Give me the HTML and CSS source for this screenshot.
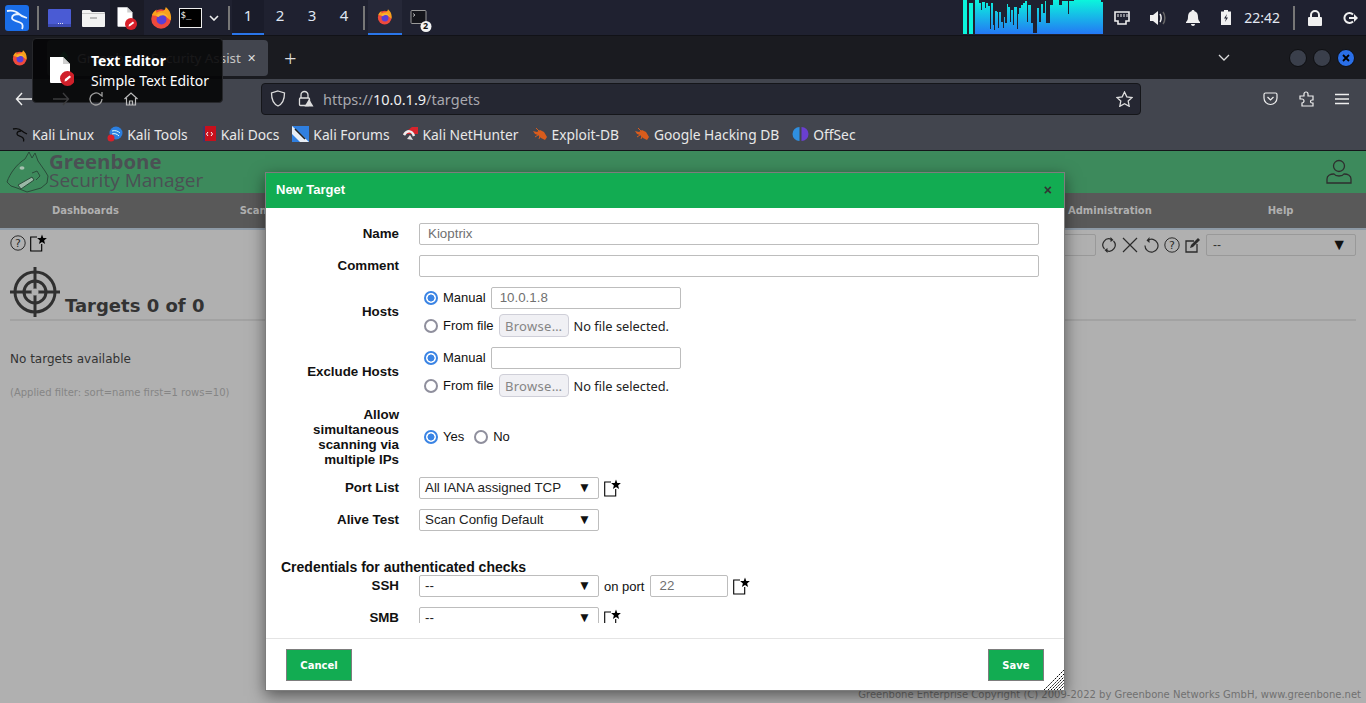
FILE: index.html
```html
<!DOCTYPE html>
<html lang="en">
<head>
  <meta charset="UTF-8">
  <title>Greenbone Security Assistant</title>
  <link rel="stylesheet" href="styles.css">
</head>
<body>

<svg class="defs" width="0" height="0">
  <defs>
    <linearGradient id="viz" x1="0" y1="0" x2="0" y2="1">
      <stop offset="0" stop-color="#0bf5dc"/>
      <stop offset="1" stop-color="#2478f5"/>
    </linearGradient>
    <symbol id="firefox" viewBox="0 0 24 24">
      <circle cx="11.5" cy="13" r="10.2" fill="#ef4a3c"/>
      <path d="M2 9c1-3 3-5 5-6-1 2-.5 3 0 3.500 2-1.500 4-2 6-1.500 2-.5 3-2.500 3.500-4.500 3 2.500 5.500 6 5.500 11 0 1-.1 2-.4 3L15 9 7 10z" fill="#f9a11c"/>
      <circle cx="12" cy="13.500" r="5.200" fill="#5a3fd6"/>
      <path d="M6.500 9.500c2-2.500 6-3.500 9-2 2 1 3.500 3 3.500 5-1-2-3-3.500-5.500-3.500-2.500 0-4 1-4.500 2-1.500-.2-2.200-.8-2.500-1.500z" fill="#fbb534"/>
    </symbol>
    <symbol id="new-icon" viewBox="0 0 20 20">
      <path d="M7 4H.7v14h11V11" fill="none" stroke="#000" stroke-width="1.100"/>
      <path d="M12 1.500l1.300 3.400 3.600.2-2.800 2.300 1 3.500-3.100-2-3.100 2 1-3.500-2.800-2.300 3.600-.2z" fill="#000"/>
    </symbol>
    <symbol id="doc" viewBox="0 0 24 28">
      <path d="M2 1h13l7 7v18a1 1 0 0 1-1 1H3a1 1 0 0 1-1-1z" fill="#fff"/>
      <path d="M15 1l7 7h-7z" fill="#cfcfcf"/>
    </symbol>
    <symbol id="bug" viewBox="0 0 16 16">
      <path d="M1 5l4 1 3-2 4 2 3 5-2 3-4-2-3-3-3-1z" fill="#d95c1c"/>
      <path d="M3 11l3-2M7 13l1-3M4 2l3 3" stroke="#d95c1c" stroke-width="1"/>
    </symbol>
  </defs>
</svg>

<div class="panel">
  <div class="launcher kali">
    <svg width="24" height="26" viewBox="0 0 24 26">
      <rect width="24" height="26" rx="3" fill="#1a6de8"/>
      <path d="M2 6c5-1 9 0 12 3 2 2 4 3 8 4M14 9c-4 0-7 1-7 4 0 3 6 3 9 5 2 1 2 4 1 6" fill="none" stroke="#eaf3ff" stroke-width="1.800"/>
    </svg>
  </div>
  <div class="sep"></div>
  <div class="launcher">
    <svg width="23" height="18" viewBox="0 0 23 18"><rect width="23" height="18" rx="1" fill="#4a5bd4"/><rect y="15" width="23" height="3" fill="#3c4ab0"/><path d="M10 14h1v1h-1zM12 14h1v1h-1zM14 14h1v1h-1z" fill="#dde"/></svg>
  </div>
  <div class="launcher">
    <svg width="23" height="18" viewBox="0 0 23 18"><path d="M0 2a1 1 0 0 1 1-1h7l2 2h12a1 1 0 0 1 1 1v13a1 1 0 0 1-1 1H1a1 1 0 0 1-1-1z" fill="#f3f3f3"/><rect y="4" width="23" height="1" fill="#c9c9c9"/><rect x="8" y="8" width="7" height="2" fill="#bbb"/></svg>
  </div>
  <div class="launcher on">
    <svg width="22" height="28" viewBox="0 0 22 28"><use href="#doc" x="0" y="0" width="18" height="26"/><circle cx="15" cy="20" r="6" fill="#d8202a"/><path d="M12.500 22.500l.5-2 4-3 1.200 1.500-4 3z" fill="#fff"/></svg>
  </div>
  <div class="launcher"><svg width="23" height="24"><use href="#firefox"/></svg></div>
  <div class="launcher term">
    <span class="term-box">$_</span>
  </div>
  <svg class="chev" width="10" height="6" viewBox="0 0 10 6"><path d="M1 1l4 4 4-4" fill="none" stroke="#eee" stroke-width="1.600"/></svg>
  <div class="sep sep-b"></div>
  <div class="ws on">1</div>
  <div class="ws">2</div>
  <div class="ws">3</div>
  <div class="ws">4</div>
  <div class="sep sep-c"></div>
  <div class="task on"><svg width="16" height="16"><use href="#firefox"/></svg></div>
  <div class="task">
    <svg width="26" height="28" viewBox="0 0 26 28"><rect x="5" y="6.500" width="15" height="13" rx="1" fill="#14151b" stroke="#9a9a9a"/><path d="M7 9.500l2 1.500-2 1.500" stroke="#ddd" fill="none" stroke-width=".8"/><circle cx="20" cy="22.500" r="5.500" fill="#f2f2f2"/></svg>
    <span class="badge">2</span>
  </div>

  <div class="tray">
    <svg class="viz" width="140" height="34" viewBox="0 0 140 34">
      <path fill="#0bf5dc" d="M0 0h4v34H0zM6 3h4v31H6z"/>
      <path fill="url(#viz)" d="M12 34V0h4v3h2v7h1V2h3v6h1V3h2v3h2v23h1V3h2v22h1v5h1V11h2v1h1v16h1V12h2v10h2v6h1V17h1v6h2V4h1v3h2v15h1V10h2v15h1V7h3v22h1V14h1V8h2V5h2V3h2V1h2v21h1V5h3v18h2v10h4V8h2v14h2V4h2v9h2V1h1v22h4V5h3V0h6v5h3V1h6v13h1V1h5V0h27v2h3v32z"/>
    </svg>
    <svg class="tray-net" width="16" height="14" viewBox="0 0 16 14"><path d="M1 1h14v9h-3v3H4v-3H1z" fill="none" stroke="#eee" stroke-width="1.600"/><path d="M4 3v3M7 3v3M10 3v3M13 3v3" stroke="#eee"/></svg>
    <svg class="tray-vol" width="18" height="16" viewBox="0 0 18 16"><path d="M1 5h3l5-4v14l-5-4H1z" fill="#f0f0f0"/><path d="M11 4c1.500 2 1.500 6 0 8" stroke="#f0f0f0" stroke-width="1.500" fill="none"/><path d="M14 2c2.500 3 2.500 9 0 12" stroke="#666" stroke-width="1.500" fill="none"/></svg>
    <svg class="tray-bell" width="16" height="16" viewBox="0 0 16 16"><path d="M8 0c1 0 1.500.6 1.500 1.300C12 2 13 4 13 7c0 3 1 4 2 5v1H1v-1c1-1 2-2 2-5 0-3 1-5 3.500-5.700C6.500.6 7 0 8 0zM6 14h4c0 1-1 2-2 2s-2-1-2-2z" fill="#f0f0f0"/></svg>
    <svg class="tray-bat" width="10" height="15" viewBox="0 0 10 15"><path d="M3 0h4v1.500h3V15H0V1.500h3z" fill="#f0f0f0"/><path d="M6 4L3 8.500h2L4 12l3-4.500H5z" fill="#1f2130"/></svg>
    <span class="clock">22:42</span>
    <div class="sep sep-d"></div>
    <svg class="tray-lock" width="14" height="16" viewBox="0 0 14 16"><path d="M3 7V5a4 4 0 0 1 8 0v2" fill="none" stroke="#f0f0f0" stroke-width="2"/><rect y="7" width="14" height="9" rx="1" fill="#f0f0f0"/></svg>
    <svg class="tray-out" width="16" height="14" viewBox="0 0 16 14"><path d="M10 3.500A5 5 0 1 0 10 10.500" fill="none" stroke="#f0f0f0" stroke-width="2"/><path d="M6 7h6" stroke="#f0f0f0" stroke-width="2"/><path d="M11 3l4 4-4 4z" fill="#f0f0f0"/></svg>
  </div>
</div>

<div class="tabbar">
  <svg class="tab-fox" width="16" height="16"><use href="#firefox"/></svg>
  <div class="tab">
    <svg width="12" height="14" viewBox="0 0 12 14"><path d="M6 0l5 6H8l3 4H7v4H5v-4H1l3-4H1z" fill="#2f9a5c"/></svg>
    <span class="tab-title">Greenbone Security Assist</span>
    <span class="tab-x">&#10005;</span>
  </div>
  <span class="tab-new">+</span>
  <div class="winbtns">
    <svg class="tab-chev" width="12" height="7" viewBox="0 0 12 7"><path d="M1 1l5 5 5-5" fill="none" stroke="#ddd" stroke-width="1.300"/></svg>
    <span class="winbtn"></span>
    <span class="winbtn"></span>
    <span class="winbtn close">
      <svg width="8" height="8" viewBox="0 0 8 8"><path d="M1 1l6 6M7 1L1 7" stroke="#000" stroke-width="1.800"/></svg>
    </span>
  </div>
</div>

<div class="toolbar">
  <div class="nav-btns">
    <svg class="back" width="18" height="14" viewBox="0 0 18 14"><path d="M17 7H2M7 1L1.500 7 7 13" fill="none" stroke="#eee" stroke-width="1.400"/></svg>
    <svg class="soft" width="18" height="14" viewBox="0 0 18 14"><path d="M1 7h15M11 1l5.500 6L11 13" fill="none" stroke="#3c3c3e" stroke-width="1.400"/></svg>
    <svg class="soft" width="16" height="16" viewBox="0 0 16 16"><path d="M14 8a6 6 0 1 1-2-4.500L14 5V1" fill="none" stroke="#a0a0a0" stroke-width="1.300"/></svg>
    <svg class="soft" width="16" height="16" viewBox="0 0 16 16"><path d="M1.500 8L8 2l6.500 6M3.500 7v7h9V7M6.500 14v-4h3v4" fill="none" stroke="#bbb" stroke-width="1.200"/></svg>
  </div>
  <div class="urlbar">
    <svg width="16" height="17" viewBox="0 0 16 17"><path d="M8 1l6.500 2c0 6-1 10.500-6.500 13C2.500 13.500 1.500 9 1.500 3z" fill="none" stroke="#ddd" stroke-width="1.300"/></svg>
    <svg class="url-lock" width="17" height="17" viewBox="0 0 17 17"><path d="M4 8V5a3.500 3.500 0 0 1 7 0v3" fill="none" stroke="#ddd" stroke-width="1.300"/><rect x="2.500" y="8" width="10" height="7.500" rx="1" fill="none" stroke="#ddd" stroke-width="1.300"/><path d="M12 9l4.500 7.500h-9z" fill="#ddd"/></svg>
    <span class="url"><span class="url-dim">https://</span>10.0.1.9<span class="url-dim">/targets</span></span>
    <svg width="17" height="16" viewBox="0 0 17 16"><path d="M8.500 1l2.300 4.800 5.200.7-3.800 3.600 1 5.200-4.700-2.500-4.700 2.500 1-5.200L1 6.500l5.200-.7z" fill="none" stroke="#ddd" stroke-width="1.300"/></svg>
  </div>
  <div class="tool-icons">
    <svg width="15" height="14" viewBox="0 0 15 14"><path d="M1 2.500C1 1.500 1.500 1 2.500 1h10c1 0 1.500.5 1.500 1.500V6a6.500 6.500 0 0 1-13 0z" fill="none" stroke="#eee" stroke-width="1.200"/><path d="M4.500 5L7.500 8l3-3" fill="none" stroke="#eee" stroke-width="1.200"/></svg>
    <svg width="15" height="16" viewBox="0 0 15 16"><path d="M1 5h4V3a2 2 0 0 1 4 0v2h5v4h-1a1.500 1.500 0 0 0 0 3h1v3H3v-3a2 2 0 0 0 0-4H1z" fill="none" stroke="#eee" stroke-width="1.200"/></svg>
    <svg width="14" height="12" viewBox="0 0 14 12"><path d="M0 1.500h14M0 6h14M0 10.500h14" stroke="#eee" stroke-width="1.300"/></svg>
  </div>
</div>

<div class="bookmarks">
  <span class="bm"><svg width="16" height="16" viewBox="0 0 16 16"><path d="M1 3c4-1 7 0 9 2 1 1 3 2 5 3M9 5C6 5 5 6 5 8c0 2 4 2 6 4 1 1 1 2 .5 3.500" fill="none" stroke="#0c0c0c" stroke-width="1.300"/></svg>Kali Linux</span>
  <span class="bm"><svg width="16" height="16" viewBox="0 0 16 16"><circle cx="9" cy="7" r="6.500" fill="#2b7fe0"/><path d="M5 5c3-1 6 0 8 2M5 8c3-1 5 0 7 2" stroke="#dff" fill="none"/><circle cx="4" cy="12" r="3.500" fill="#d8202a"/></svg>Kali Tools</span>
  <span class="bm"><svg width="16" height="16" viewBox="0 0 16 16"><rect x="2" width="13" height="15" fill="#c8101c"/><rect x="2" width="2" height="16" fill="#3a3a6a"/><path d="M7 6L5.500 8 7 10M10 6l1.500 2L10 10" stroke="#fff" fill="none"/></svg>Kali Docs</span>
  <span class="bm"><svg width="17" height="16" viewBox="0 0 17 16"><rect width="17" height="16" fill="#2f7fe0"/><path d="M0 0l17 16H8L0 8z" fill="#e8eef5"/><path d="M3 3l10 10" stroke="#222" stroke-width="1.500"/></svg>Kali Forums</span>
  <span class="bm"><svg width="16" height="16" viewBox="0 0 16 16"><path d="M0 8L9 1h6v7z" fill="#d8242c"/><path d="M1 9c3-5 8-5 10 1" fill="none" stroke="#eee" stroke-width="2.500"/><path d="M4 13l3-4 3 5z" fill="#ddd"/></svg>Kali NetHunter</span>
  <span class="bm bm-db"><svg width="16" height="16"><use href="#bug"/></svg>Exploit-DB</span>
  <span class="bm"><svg width="16" height="16"><use href="#bug"/></svg>Google Hacking DB</span>
  <span class="bm"><svg width="17" height="16" viewBox="0 0 16 16"><path d="M7 1a7 7 0 0 0 0 14z" fill="#2f8fe0"/><path d="M9 1a7 7 0 0 1 0 14z" fill="#6a3fd0"/></svg>OffSec</span>
</div>

<div class="page">
  <header class="gsm-head">
    <svg class="gsm-logo" width="44" height="42" viewBox="0 0 44 42">
      <path d="M2 31C5 22 12 13 20 8l4-7 3 6 3-5 3 8 7 10 3 5-1 7-6 5-14 4-10-4-6-2z" fill="none" stroke="#2a4c3a" stroke-width="1"/>
      <path d="M13 34l14-8 2 3-13 9z" fill="#9ab8a6" stroke="#2a4c3a"/>
      <path d="M27 22l5-2 3 5-4 4" fill="none" stroke="#2a4c3a"/>
      <ellipse cx="17" cy="17" rx="2.500" ry="1.800" fill="#a8c0b0"/>
    </svg>
    <div class="gsm-name">
      <span class="gsm-brand">Greenbone</span>
      <span class="gsm-sub">Security Manager</span>
    </div>
    <svg class="gsm-user" width="26" height="26" viewBox="0 0 26 26"><circle cx="13" cy="7" r="5.500" fill="none" stroke="#2e2e2e" stroke-width="1.300"/><path d="M1 24v-4c0-3 3-5 7-5 1 1.500 3 2 5 2s4-.5 5-2c4 0 7 2 7 5v4z" fill="none" stroke="#2e2e2e" stroke-width="1.300"/></svg>
  </header>

  <nav class="gsm-nav">
    <span>Dashboards</span>
    <span>Scans</span>
    <span>Assets</span>
    <span>Resilience</span>
    <span>SecInfo</span>
    <span>Configuration</span>
    <span>Administration</span>
    <span>Help</span>
  </nav>

  <div class="gsm-bar">
    <div class="gsm-tools">
      <svg width="16" height="16" viewBox="0 0 16 16"><circle cx="8" cy="8" r="7.200" fill="none" stroke="#2b2b2b"/><text x="8" y="12" text-anchor="middle" class="q">?</text></svg>
      <svg width="20" height="20"><use href="#new-icon"/></svg>
    </div>
    <div class="gsm-filter">
      <span class="filter-input"></span>
      <svg width="16" height="16" viewBox="0 0 15 16"><path d="M3 12A6 6 0 0 1 10 2.500M12 4a6 6 0 0 1-7 9.500" fill="none" stroke="#2b2b2b" stroke-width="1.200"/><path d="M9 0l3 3-3 2zM6 16l-3-3 3-2z" fill="#2b2b2b"/></svg>
      <svg width="16" height="16" viewBox="0 0 16 16"><path d="M1 1l14 14M15 1L1 15" stroke="#2b2b2b" stroke-width="1.200"/></svg>
      <svg width="16" height="16" viewBox="0 0 15 16"><path d="M4 3.500a6.500 6.500 0 1 1-2.500 5" fill="none" stroke="#2b2b2b" stroke-width="1.200"/><path d="M6 0L3 3.500 6 6z" fill="#2b2b2b"/></svg>
      <svg width="16" height="16" viewBox="0 0 16 16"><circle cx="8" cy="8" r="7.200" fill="none" stroke="#2b2b2b"/><text x="8" y="12" text-anchor="middle" class="q">?</text></svg>
      <svg width="16" height="16" viewBox="0 0 16 16"><path d="M12 7v8H1V4h8" fill="none" stroke="#2b2b2b" stroke-width="1.300"/><path d="M5 11l1-3 7-7 2 2-7 7z" fill="#2b2b2b"/></svg>
      <span class="filter-select">--<span class="arrow">&#9660;</span></span>
    </div>
  </div>

  <div class="gsm-title">
    <svg width="50" height="50" viewBox="0 0 50 50">
      <circle cx="25" cy="25" r="20" fill="none" stroke="#303030" stroke-width="3"/>
      <circle cx="25" cy="25" r="11" fill="none" stroke="#303030" stroke-width="3"/>
      <path d="M25 0v50M0 25h50" stroke="#303030" stroke-width="3"/>
      <circle cx="25" cy="25" r="3.500" fill="#b0b0b0"/>
    </svg>
    <h1>Targets 0 of 0</h1>
  </div>
  <p class="empty">No targets available</p>
  <p class="applied">(Applied filter: sort=name first=1 rows=10)</p>
  <footer class="copyright">Greenbone Enterprise Copyright (C) 2009-2022 by Greenbone Networks GmbH, www.greenbone.net</footer>

  <section class="dialog">
    <div class="dialog-head">
      <span>New Target</span>
      <span class="dialog-x">&times;</span>
    </div>
    <div class="dialog-body">
      <div class="row">
        <label>Name</label>
        <input class="text wide" type="text" value="Kioptrix">
      </div>
      <div class="row">
        <label>Comment</label>
        <input class="text wide" type="text">
      </div>
      <div class="row">
        <label>Hosts</label>
        <div class="stack">
          <div class="line">
            <input class="radio" type="radio" name="hosts" checked><span class="opt">Manual</span>
            <input class="text mid" type="text" value="10.0.1.8">
          </div>
          <div class="line file">
            <input class="radio" type="radio" name="hosts"><span class="opt">From file</span>
            <button class="browse" type="button">Browse&hellip;</button><span class="nofile">No file selected.</span>
          </div>
        </div>
      </div>
      <div class="row">
        <label>Exclude Hosts</label>
        <div class="stack">
          <div class="line">
            <input class="radio" type="radio" name="exclude" checked><span class="opt">Manual</span>
            <input class="text mid" type="text">
          </div>
          <div class="line file">
            <input class="radio" type="radio" name="exclude"><span class="opt">From file</span>
            <button class="browse" type="button">Browse&hellip;</button><span class="nofile">No file selected.</span>
          </div>
        </div>
      </div>
      <div class="row">
        <label class="tall">Allow simultaneous scanning via multiple IPs</label>
        <div class="line">
          <input class="radio" type="radio" name="multi" checked><span class="opt">Yes</span>
          <input class="radio radio-no" type="radio" name="multi"><span class="opt">No</span>
        </div>
      </div>
      <div class="row">
        <label>Port List</label>
        <span class="select">All IANA assigned TCP<span class="arrow">&#9660;</span></span>
        <svg class="new" width="20" height="20"><use href="#new-icon"/></svg>
      </div>
      <div class="row">
        <label>Alive Test</label>
        <span class="select">Scan Config Default<span class="arrow">&#9660;</span></span>
      </div>
      <h3>Credentials for authenticated checks</h3>
      <div class="row">
        <label>SSH</label>
        <span class="select">--<span class="arrow">&#9660;</span></span>
        <span class="onport">on port</span>
        <input class="text port" type="text" value="22">
        <svg class="new" width="20" height="20"><use href="#new-icon"/></svg>
      </div>
      <div class="row">
        <label>SMB</label>
        <span class="select">--<span class="arrow">&#9660;</span></span>
        <svg class="new" width="20" height="20"><use href="#new-icon"/></svg>
      </div>
    </div>
    <div class="dialog-foot">
      <button class="act act-cancel" type="button">Cancel</button>
      <button class="act act-save" type="button">Save</button>
      <svg class="grip" width="20" height="20" viewBox="0 0 20 20">
        <path d="M0 20L20 0M4 20L20 4M7 20L20 7M10 20L20 10M13 20l7-7M16 20l4-4" stroke="#000" stroke-width="1" stroke-dasharray="2 1"/>
      </svg>
    </div>
  </section>
</div>

<div class="tooltip">
  <svg width="26" height="30" viewBox="0 0 26 30"><use href="#doc" x="0" y="0" width="24" height="28"/><circle cx="19.500" cy="22.500" r="7.500" fill="#d0202a"/><path d="M16.500 25.500l.5-2.500 4.500-3.500 1.500 1.500-4.500 4z" fill="#fff"/></svg>
  <div>
    <div class="tip-title">Text Editor</div>
    <div class="tip-sub">Simple Text Editor</div>
  </div>
</div>

</body>
</html>
```

FILE: styles.css
```css
body {
  margin: 0;
  width: 1366px;
  height: 703px;
  overflow: hidden;
  position: relative;
  background-color: #b0b0b0;
  font-family: 'Noto Sans', sans-serif;
}

.defs {
  display: block;
  height: 0;
}

/* desktop panel */
.panel {
  height: 35px;
  background-color: #1f2130;
  border-bottom: 1px solid #111217;
  display: flex;
  align-items: center;
  color: #dfe6f2;
}

.launcher {
  width: 34px;
  height: 35px;
  display: flex;
  justify-content: center;
  align-items: center;
}

.launcher.kali {
  width: 24px;
  margin-left: 5px;
}

.launcher.on {
  background-color: #1a1b26;
}

.sep {
  width: 2px;
  height: 24px;
  background-color: #777;
  margin: 0 3px 0 8px;
}

.sep-b {
  margin: 0 2px 0 9px;
}

.sep-c {
  margin: 0 3px 0 3px;
}

.sep-d {
  margin: 0 0 0 13px;
}

.term {
  margin-left: -5px;
}

.term-box {
  width: 20px;
  height: 18px;
  background-color: #000;
  border: 1px solid #eee;
  font-family: 'DejaVu Sans Mono', monospace;
  font-size: 9px;
  line-height: 12px;
  padding-left: 1px;
  box-sizing: content-box;
  color: #fff;
}

.chev {
  margin-left: 2px;
}

.ws {
  width: 32px;
  height: 35px;
  box-sizing: border-box;
  text-align: center;
  font-size: 15px;
  line-height: 31px;
}

.ws.on {
  background-color: #1a1c2a;
  border-bottom: 2px solid #2a76ea;
}

.task {
  width: 34px;
  height: 35px;
  box-sizing: border-box;
  display: flex;
  justify-content: center;
  align-items: center;
  position: relative;
}

.task.on {
  background-color: #262838;
  border-bottom: 2px solid #2a76ea;
}

.badge {
  position: absolute;
  left: 18px;
  top: 20px;
  width: 11px;
  font-size: 9px;
  line-height: 11px;
  font-weight: 700;
  text-align: center;
  color: #111;
}

.tray {
  margin-left: auto;
  display: flex;
  align-items: center;
  height: 35px;
  padding-right: 7px;
}

.viz {
  margin-right: 11px;
  align-self: flex-start;
}

.tray-vol {
  margin-left: 19px;
}

.tray-bell {
  margin-left: 18px;
}

.tray-bat {
  margin-left: 20px;
}

.clock {
  margin-left: 13px;
  font-size: 14px;
  color: #e3e8f2;
}

.tray-lock {
  margin-left: 13px;
}

.tray-out {
  margin-left: 21px;
}

/* browser */
.tabbar {
  height: 43px;
  background-color: #1a1b20;
  display: flex;
  align-items: center;
  color: #ddd;
}

.tab-fox {
  margin-left: 12px;
}

.tab {
  width: 221px;
  height: 36px;
  margin-left: 19px;
  background-color: #42454e;
  border-radius: 4px;
  box-sizing: border-box;
  padding: 0 12px 0 11px;
  display: flex;
  align-items: center;
  font-size: 13.4px;
  white-space: nowrap;
}

.tab-title {
  flex: 1;
  margin-left: 7px;
  color: #c4c4c4;
  overflow: hidden;
}

.tab-x {
  font-size: 11px;
  margin-left: 4px;
}

.tab-new {
  margin-left: 16px;
  font-size: 22px;
  font-weight: 300;
}

.winbtns {
  margin-left: auto;
  padding-right: 11px;
  display: flex;
  align-items: center;
  gap: 6px;
}

.tab-chev {
  margin-right: 53px;
}

.winbtn {
  width: 16px;
  height: 16px;
  border: 1px solid #0e0f12;
  border-radius: 50%;
  background-color: #3a3f4b;
  display: flex;
  align-items: center;
  justify-content: center;
}

.winbtn.close {
  background-color: #2a6fe8;
}

.toolbar {
  height: 39px;
  background-color: #42454e;
  display: flex;
  align-items: center;
}

.nav-btns {
  width: 261px;
  box-sizing: border-box;
  padding: 0 122px 0 15px;
  display: flex;
  justify-content: space-between;
  align-items: center;
}

/* these sit under the tooltip in the shot but still read through it */
.soft {
  position: relative;
  z-index: 2;
}

.urlbar {
  width: 880px;
  height: 32px;
  box-sizing: border-box;
  background-color: #252732;
  border: 1px solid #15161a;
  border-radius: 4px;
  padding: 0 7px 0 8px;
  display: flex;
  align-items: center;
}

.url-lock {
  margin-left: 11px;
}

.url {
  margin-left: 9px;
  flex: 1;
  font-size: 14.5px;
  color: #f0f0f0;
}

.url-dim {
  color: #a8a8ae;
}

.tool-icons {
  margin-left: 122px;
  display: flex;
  align-items: center;
  gap: 21px;
}

.bookmarks {
  height: 32px;
  background-color: #42454e;
  border-bottom: 1px solid #14151a;
  display: flex;
  align-items: center;
  padding-left: 12px;
  gap: 13px;
  font-size: 13.8px;
  color: #e8e8e8;
}

.bm {
  display: flex;
  align-items: center;
  gap: 4px;
  white-space: nowrap;
}

.bm-db {
  margin-right: 2px;
}

/* greenbone page, dimmed by the dialog backdrop */
.page {
  position: relative;
  height: 552px;
  background-color: #b0b0b0;
  font-family: 'DejaVu Sans', sans-serif;
  color: #333;
}

.gsm-head {
  height: 42px;
  background-color: #3d8a5c;
  display: flex;
  align-items: center;
  padding: 0 14px 0 5px;
}

.gsm-name {
  display: flex;
  flex-direction: column;
  margin-top: -4px;
  font-family: 'Open Sans', sans-serif;
  color: #4b5054;
}

.gsm-brand {
  font-size: 20.4px;
  font-weight: 700;
  line-height: 20px;
}

.gsm-sub {
  font-size: 19px;
  line-height: 19px;
}

.gsm-user {
  margin-left: auto;
}

.gsm-nav {
  height: 35px;
  background-color: #595959;
  border-bottom: 2px solid #8e9aa6;
  display: grid;
  grid-template-columns: repeat(8, 1fr);
  align-items: center;
  text-align: center;
  font-size: 10px;
  font-weight: 700;
  color: #b0b0b0;
}

.gsm-bar {
  height: 30px;
  padding: 0 10px;
  display: flex;
  justify-content: space-between;
  align-items: center;
}

.gsm-tools,
.gsm-filter {
  display: flex;
  align-items: center;
  gap: 5px;
}

.gsm-tools {
  gap: 4px;
  margin-top: -4px;
}

.q {
  font-size: 11px;
  fill: #2b2b2b;
}

.filter-input {
  width: 100px;
  height: 20px;
  border: 1px solid #999;
  border-radius: 2px;
}

.filter-select {
  width: 150px;
  height: 22px;
  box-sizing: border-box;
  border: 1px solid #999;
  border-radius: 2px;
  padding: 0 8px 0 6px;
  display: flex;
  align-items: center;
  justify-content: space-between;
  font: 12px 'Liberation Sans', sans-serif;
}

.gsm-title {
  margin: 7px 10px 0;
  padding-bottom: 2px;
  border-bottom: 2px solid #a2a2a2;
  display: flex;
  align-items: flex-end;
  gap: 5px;
}

h1 {
  margin: 0;
  font-size: 18px;
  line-height: 22px;
  color: #333;
}

.empty {
  margin: 31px 10px 0;
  font-size: 12px;
  line-height: 15px;
}

.applied {
  margin: 19px 10px 0;
  font-size: 10px;
  line-height: 13px;
  color: #858585;
}

.copyright {
  position: absolute;
  right: 5px;
  bottom: 2px;
  font-size: 10px;
  line-height: 13px;
  color: #707070;
}

/* dialog */
.dialog {
  position: absolute;
  left: 265px;
  top: 21px;
  width: 800px;
  height: 519px;
  box-sizing: border-box;
  background-color: #fff;
  border: 1px solid #7d7d7d;
  box-shadow: 0 5px 15px rgba(0, 0, 0, 0.5);
  display: flex;
  flex-direction: column;
  font-family: 'Liberation Sans', sans-serif;
  font-size: 13.33px;
  color: #111;
}

.dialog-head {
  height: 35px;
  flex: none;
  box-sizing: border-box;
  background-color: #12ac52;
  color: #fff;
  font-size: 13px;
  font-weight: 700;
  padding: 0 10px 2px;
  display: flex;
  align-items: center;
  justify-content: space-between;
}

.dialog-x {
  color: #333;
  font-size: 14px;
  margin-right: 2px;
}

.dialog-body {
  height: 415px;
  flex: none;
  margin-bottom: 15px;
  padding: 15px 0 0 15px;
  box-sizing: border-box;
  overflow: hidden;
}

.row {
  display: flex;
  align-items: center;
  margin-bottom: 10px;
}

.row label {
  width: 118px;
  flex: none;
  margin-right: 20px;
  margin-top: -2px;
  text-align: right;
  font-weight: 700;
  line-height: 15px;
}

.row label.tall {
  margin-top: 0;
}

.text {
  height: 22px;
  box-sizing: border-box;
  border: 1px solid #bdbdbd;
  border-radius: 2px;
  padding: 0 8px 2px;
  font: 13.33px 'Liberation Sans', sans-serif;
  color: #707070;
  background-color: #fff;
}

.wide {
  width: 620px;
}

.mid {
  width: 190px;
  margin-left: 5px;
}

.port {
  width: 78px;
  margin-left: 6px;
}

.stack {
  display: flex;
  flex-direction: column;
  gap: 5px;
}

.line {
  display: flex;
  align-items: center;
  padding-left: 5px;
  min-height: 22px;
}

.line.file {
  min-height: 23px;
}

.radio {
  appearance: none;
  width: 14px;
  height: 14px;
  margin: 0 5px 0 0;
  border: 2px solid #8f8f9d;
  border-radius: 50%;
  background-color: #fff;
  box-sizing: border-box;
}

.radio:checked {
  border-color: #3a84e4;
  background: radial-gradient(circle, #3a84e4 0 3.2px, #fff 3.8px);
}

.radio-no {
  margin-left: 10px;
}

.opt {
  font-size: 13px;
  line-height: 15px;
  margin-top: -2px;
}

.file .opt {
  margin-top: 0;
}

.browse {
  width: 70px;
  height: 23px;
  margin-left: 5px;
  padding: 0;
  border: 1px solid #cfcfd8;
  border-radius: 4px;
  background-color: #f0f0f4;
  font: 13px 'Noto Sans', sans-serif;
  letter-spacing: 0.3px;
  color: #858585;
}

.nofile {
  margin-left: 5px;
  font: 12.8px 'Noto Sans', sans-serif;
  color: #222;
}

.select {
  width: 180px;
  height: 22px;
  box-sizing: border-box;
  border: 1px solid #bdbdbd;
  border-radius: 2px;
  padding: 0 7px 2px 5px;
  display: flex;
  align-items: center;
  justify-content: space-between;
  color: #222;
}

.arrow {
  font-size: 13.5px;
  color: #111;
}

.filter-select .arrow {
  font-size: 16px;
}

.new {
  margin-left: 5px;
}

.onport {
  margin-left: 5px;
  font-size: 13px;
}

h3 {
  margin: 28px 0 0;
  font-size: 14px;
  line-height: 16px;
  color: #111;
}

.dialog-foot {
  flex: 1;
  border-top: 1px solid #e4e4e4;
  padding: 10px 20px 0;
  display: flex;
  justify-content: space-between;
  align-items: flex-start;
  position: relative;
}

.act {
  height: 32px;
  padding: 0;
  background-color: #12ac52;
  border: 1px solid #7d7d7d;
  color: #fff;
  font: 700 10px 'DejaVu Sans', sans-serif;
}

.act-cancel {
  width: 66px;
}

.act-save {
  width: 56px;
}

.grip {
  position: absolute;
  right: 0;
  bottom: 0;
}

/* launcher tooltip */
.tooltip {
  position: absolute;
  z-index: 1;
  left: 32px;
  top: 38px;
  width: 191px;
  height: 65px;
  box-sizing: border-box;
  background-color: rgba(6, 6, 7, 0.9);
  border: 1px solid #26272b;
  border-radius: 4px;
  padding: 0 0 0 15px;
  display: flex;
  align-items: center;
  gap: 17px;
  color: #fff;
}

.tip-title {
  font-size: 14px;
  font-weight: 700;
  line-height: 20px;
}

.tip-sub {
  font-size: 14px;
  line-height: 19px;
}
```
